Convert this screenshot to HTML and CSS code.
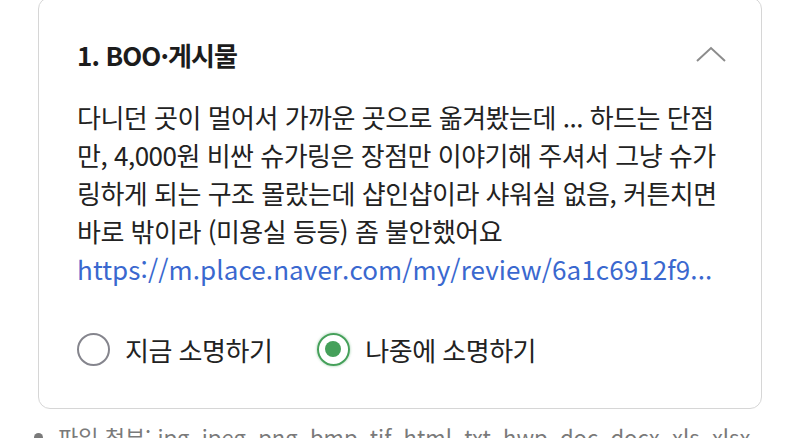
FILE: index.html
```html
<!DOCTYPE html>
<html lang="ko">
<head>
    <meta charset="UTF-8">
    <meta name="viewport" content="width=device-width, initial-scale=1.0">
    <title>소명하기</title>
    <link rel="stylesheet" href="styles.css">
</head>
<body>
    <div class="page">
        <!-- Report card -->
        <div class="card">
            <div class="card-header">
                <h2 class="card-title">1. BOO·게시물</h2>
                <button class="toggle" type="button" aria-label="접기">
                    <svg width="30" height="16" viewBox="0 0 30 16">
                        <polyline points="1,15 15,2 29,15" fill="none" stroke="#8c8c8c" stroke-width="2"/>
                    </svg>
                </button>
            </div>

            <p class="card-body">다니던 곳이 멀어서 가까운 곳으로 옮겨봤는데 ... 하드는 단점만, 4,000원 비싼 슈가링은 장점만 이야기해 주셔서 그냥 슈가링하게 되는 구조 몰랐는데 샵인샵이라 샤워실 없음, 커튼치면 바로 밖이라 (미용실 등등) 좀 불안했어요</p>
            <a class="card-link" href="#">https://m.place.naver.com/my/review/6a1c6912f9...</a>

            <!-- Options -->
            <div class="options">
                <label class="option">
                    <input type="radio" name="when" value="now">
                    <span class="radio"></span>
                    <span>지금 소명하기</span>
                </label>
                <label class="option">
                    <input type="radio" name="when" value="later" checked>
                    <span class="radio"></span>
                    <span>나중에 소명하기</span>
                </label>
            </div>
        </div>

        <ul class="notes">
            <li>파일 첨부: jpg, jpeg, png, bmp, tif, html, txt, hwp, doc, docx, xls, xlsx</li>
        </ul>
    </div>
</body>
</html>
```

FILE: styles.css
```css
/* General styles */
* {
    margin: 0;
    padding: 0;
    box-sizing: border-box;
}

body {
    font-family: "Noto Sans CJK KR", "Noto Sans", sans-serif;
    background-color: #ffffff;
    color: #222222;
    overflow: hidden;
}

.page {
    padding: 0 38px 0 38px;
}

/* Card */
.card {
    margin-top: -3px;
    border: 1px solid #d6d6d6;
    border-radius: 12px;
    padding: 39px 38px 40px 38px;
    background-color: #ffffff;
}

.card-header {
    display: flex;
    justify-content: space-between;
    align-items: center;
    height: 34px;
}

.card-title {
    font-size: 26px;
    font-weight: 600;
    letter-spacing: -0.9px;
    color: #1c1c1c;
}

.toggle {
    background: none;
    border: none;
    display: flex;
    margin-right: -3px;
}

.card-body {
    margin-top: 27px;
    font-size: 26px;
    line-height: 38px;
    letter-spacing: -0.5px;
    color: #222222;
}

.card-link {
    display: block;
    font-size: 26px;
    line-height: 38px;
    letter-spacing: 0.1px;
    color: #3a68cf;
    text-decoration: none;
    white-space: nowrap;
    overflow: hidden;
}

/* Radio options */
.options {
    display: flex;
    gap: 45px;
    margin-top: 43px;
}

.option {
    display: flex;
    align-items: center;
    gap: 15px;
    font-size: 26px;
    letter-spacing: -0.5px;
    color: #222222;
    cursor: pointer;
}

.option input {
    display: none;
}

.radio {
    width: 33px;
    height: 33px;
    border: 2.5px solid #85858d;
    border-radius: 50%;
    position: relative;
}

.option input:checked + .radio {
    border-color: #45a05a;
    box-shadow: 0 0 2px 1px rgba(69, 160, 90, 0.25);
}

.option input:checked + .radio::after {
    content: "";
    position: absolute;
    top: 6px;
    left: 6px;
    width: 16px;
    height: 16px;
    border-radius: 50%;
    background-color: #45a05a;
}

/* Notes under card */
.notes {
    margin-top: 11px;
    padding-left: 20px;
    font-size: 22px;
    line-height: 32px;
    color: #7a7a7a;
    white-space: nowrap;
}
```
